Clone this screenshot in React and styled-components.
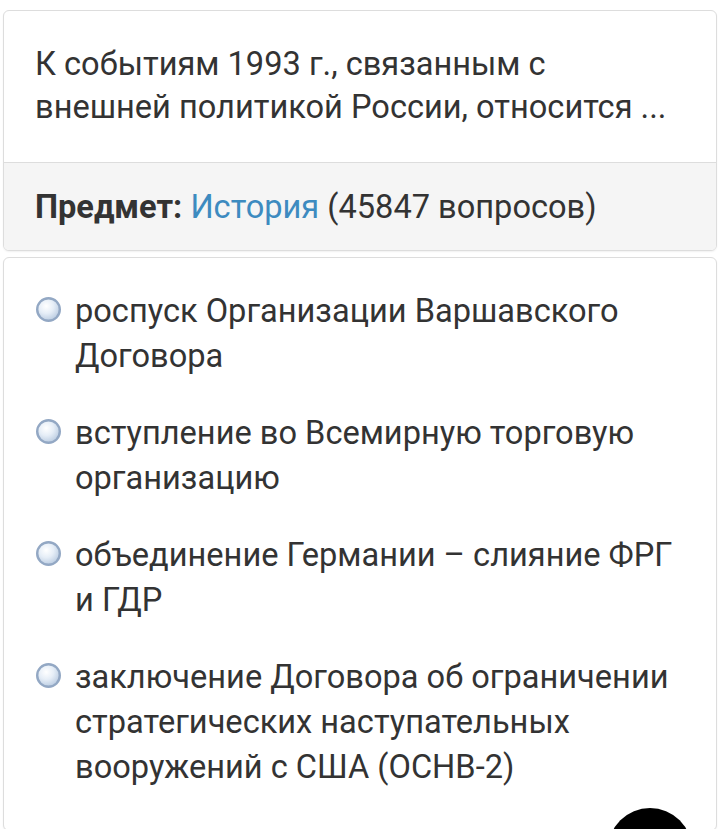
import React from "react";
import styled, { createGlobalStyle } from "styled-components";

const GlobalStyle = createGlobalStyle`
  body {
    margin: 0;
    background: #ffffff;
    font-family: Roboto, "Noto Sans", sans-serif;
    color: #333333;
    overflow: hidden;
  }
`;

const answers = [
  "роспуск Организации Варшавского Договора",
  "вступление во Всемирную торговую организацию",
  "объединение Германии – слияние ФРГ и ГДР",
  "заключение Договора об ограничении стратегических наступательных вооружений с США (ОСНВ-2)",
];

const RadioIcon = () => (
  <svg width="27" height="27" viewBox="0 0 27 27">
    <defs>
      <radialGradient id="rg" cx="40%" cy="35%" r="65%">
        <stop offset="0%" stopColor="#ffffff" />
        <stop offset="50%" stopColor="#e6eef7" />
        <stop offset="100%" stopColor="#bccde2" />
      </radialGradient>
    </defs>
    <circle cx="13.5" cy="13.5" r="11.3" fill="url(#rg)" stroke="#93a8c4" strokeWidth="2.4" />
  </svg>
);

const App = () => {
  return (
    <Page>
      <GlobalStyle />
      <Panel>
        <Question>
          К событиям 1993 г., связанным с внешней политикой России, относится ...
        </Question>
        <Footer>
          <b>Предмет:</b> <SubjectLink href="#">История</SubjectLink> (45847 вопросов)
        </Footer>
      </Panel>

      <Panel>
        <AnswerList>
          {answers.map((a) => (
            <Answer key={a}>
              <RadioWrap>
                <RadioIcon />
              </RadioWrap>
              <span>{a}</span>
            </Answer>
          ))}
        </AnswerList>
      </Panel>

      <FloatButton />
    </Page>
  );
};

const Page = styled.div`
  padding: 10px 3px 0;
  display: flex;
  flex-direction: column;
  gap: 6px;
  height: 819px;
  overflow: hidden;
`;

const Panel = styled.div`
  border: 1px solid #dddddd;
  border-radius: 6px;
  background: #ffffff;
  box-shadow: 0 1px 2px rgba(0, 0, 0, 0.06);
  overflow: hidden;
  flex-shrink: 0;
`;

const Question = styled.div`
  padding: 32px 31px 33px;
  font-size: 32.6px;
  line-height: 43px;
`;

const Footer = styled.div`
  padding: 23px 31px 21px;
  background: #f5f5f5;
  border-top: 1px solid #dddddd;
  font-size: 32.6px;
  line-height: 43px;

  b {
    font-weight: 700;
  }
`;

const SubjectLink = styled.a`
  color: #3d8bc0;
  text-decoration: none;
`;

const AnswerList = styled.div`
  padding: 31px 31px 40px;
  display: flex;
  flex-direction: column;
  gap: 32px;
`;

const Answer = styled.div`
  display: flex;
  align-items: flex-start;
  gap: 13px;
  font-size: 32.6px;
  line-height: 45px;
`;

const RadioWrap = styled.div`
  flex-shrink: 0;
  width: 27px;
  height: 45px;
  display: flex;
  align-items: center;
  margin-top: -2px;
`;

const FloatButton = styled.div`
  position: fixed;
  left: 608px;
  top: 808px;
  width: 84px;
  height: 84px;
  border-radius: 50%;
  background: #000000;
`;

export default App;
